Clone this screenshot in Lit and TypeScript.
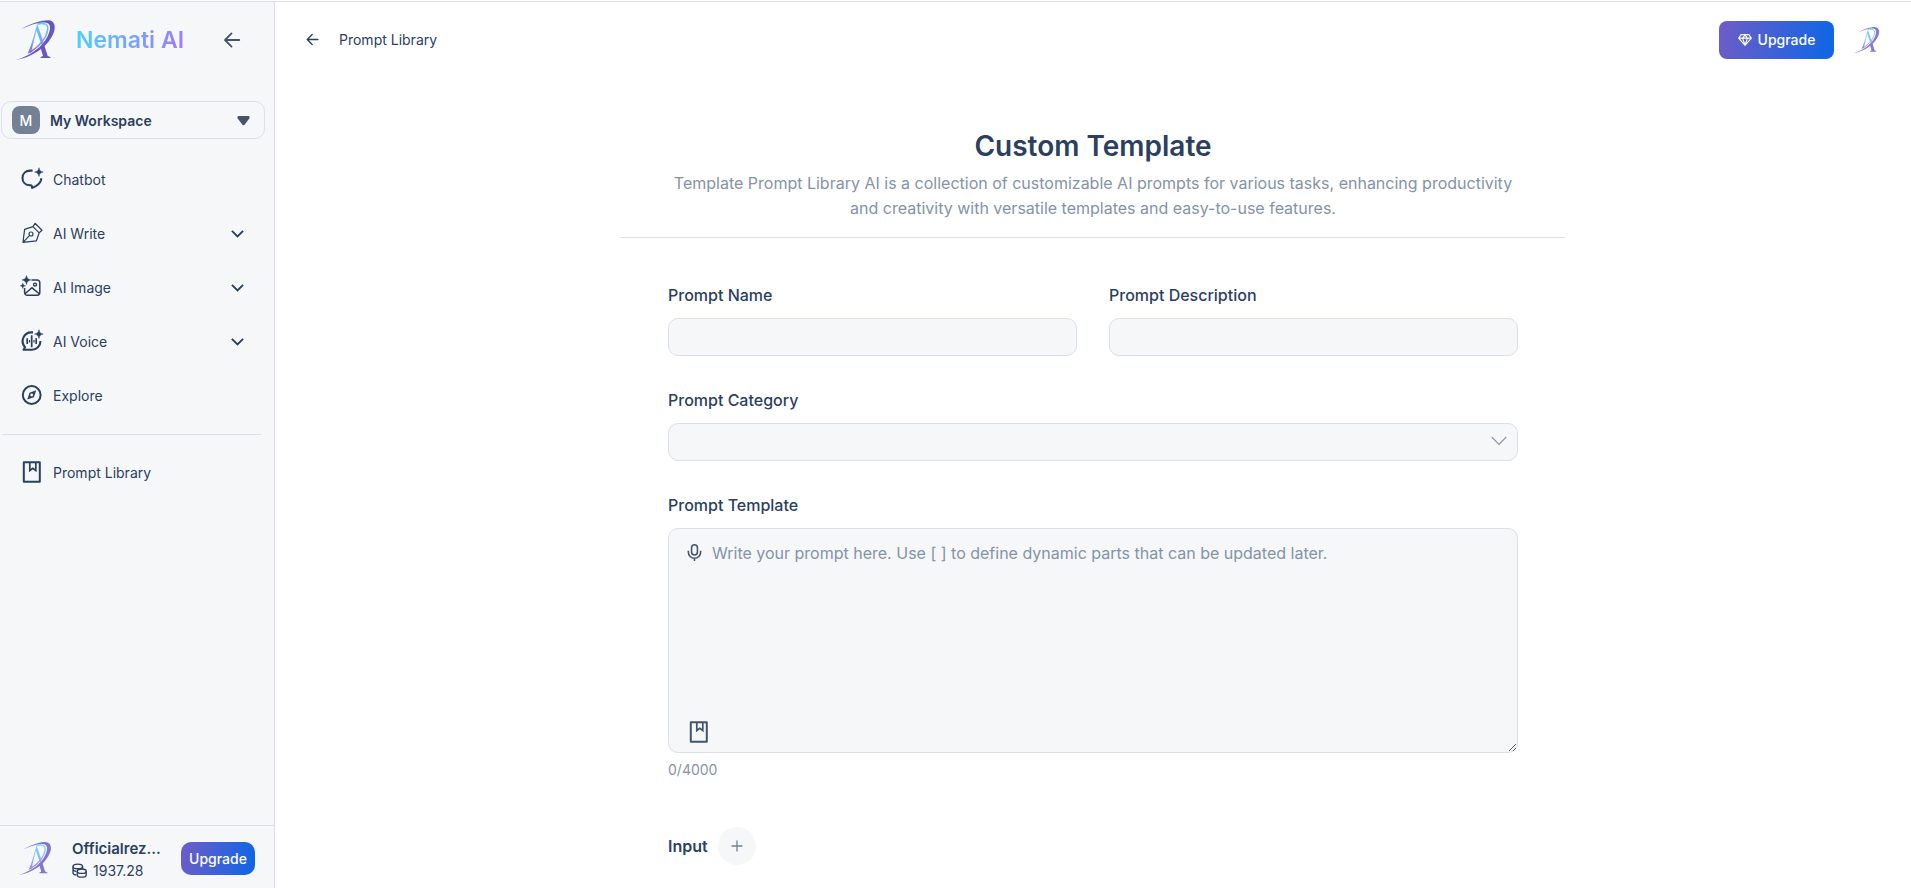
import { LitElement, html, css, svg, nothing } from "lit";
import { customElement, property, state } from "lit/decorators.js";

const icons: Record<string, unknown> = {
  chat: svg`<path d="M11.6 2.6H9.2C4.6 2.6 1.500 5.600 1.500 10c0 4.200 2.900 6.900 6.800 7.300h1.500c.9 0 1.300 .9 1.300 2.600 2.500-1 7.400-2.700 8.900-7.700.1-.5.2-1.200.2-1.900" fill="none" stroke="currentColor" stroke-width="2.100" stroke-linejoin="round"/><path d="M18 -.3c.6 2.800 1.300 3.600 4.200 4.400-2.900.7-3.600 1.500-4.200 4.400-.7-2.900-1.500-3.700-4.400-4.400 2.900-.8 3.700-1.600 4.400-4.400Z" fill="currentColor" stroke="currentColor" stroke-width=".5"/>`,
  pen: svg`<path d="M2 20.300 3.600 7.400 12 4.600l6.200 6.200-2.800 8Z M2 20.300l6.700-7 M12 4.600l2.100-3.200 6.900 6.900-2.800 2.500 M14.200 1.500 21 8.200" fill="none" stroke="currentColor" stroke-width="1.200" stroke-linejoin="round"/><circle cx="10" cy="12" r="2" fill="none" stroke="currentColor" stroke-width="1.200"/>`,
  image: svg`<path d="M10.500 4h5.700a2.600 2.600 0 0 1 2.600 2.600v10a2.600 2.600 0 0 1-2.600 2.600h-10a2.600 2.600 0 0 1-2.600-2.600V12M4 17.800l7-6 7.500 6.200" fill="none" stroke="currentColor" stroke-width="1.500"/><circle cx="14" cy="8.600" r="1.500" fill="none" stroke="currentColor" stroke-width="1.400"/><path d="M5.500-.5c.6 3 1.400 3.700 4.400 4.400-3 .7-3.800 1.500-4.400 4.500C4.800 5.400 4 4.600 1 3.900c3-.7 3.800-1.400 4.500-4.400ZM1.800 7.200c.4 1.700.9 2.200 2.700 2.600-1.800.4-2.300.9-2.700 2.700C1.400 10.700.9 10.200-.8 9.800c1.700-.4 2.200-.9 2.600-2.600Z" fill="currentColor" stroke="currentColor" stroke-width=".5"/>`,
  voice: svg`<path d="M12 2.400h-1.500A8.800 8.800 0 0 0 4 17.200L2.500 19.700h8.200A8.700 8.700 0 0 0 19.500 11" fill="none" stroke="currentColor" stroke-width="2.100" stroke-linejoin="round"/><path d="M6.200 8.300v5.700M10.700 5.300v12M15.200 8.300v5.700" fill="none" stroke="currentColor" stroke-width="1.700"/><path d="M8.500 10v2.400M13 10v2.400" fill="none" stroke="currentColor" stroke-width="1.200"/><path d="M18 -.3c.6 2.800 1.300 3.600 4.200 4.400-2.900.7-3.600 1.500-4.200 4.400-.7-2.900-1.500-3.700-4.400-4.400 2.900-.8 3.700-1.600 4.400-4.400Z" fill="currentColor" stroke="currentColor" stroke-width=".5"/>`,
  compass: svg`<circle cx="10.700" cy="11" r="8.900" fill="none" stroke="currentColor" stroke-width="2"/><path d="M15.200 6.300 12.900 13.200 6.300 15.600 8.500 8.800Z M10.700 9.600a1.400 1.400 0 1 0 0 2.800 1.400 1.400 0 0 0 0-2.800Z" fill="currentColor" fill-rule="evenodd"/>`,
  book: svg`<path d="M2.800 1.200h16v19.600h-16Z" fill="none" stroke="currentColor" stroke-width="2" stroke-linejoin="round"/><path d="M8.800 1v8.500l3-2.200 3 2.200V1" fill="none" stroke="currentColor" stroke-width="1.700"/>`,
  back: svg`<path d="M19 11H3.500M10.500 3.800 3.300 11l7.200 7.200" fill="none" stroke="currentColor" stroke-width="2" stroke-linecap="round" stroke-linejoin="round"/>`,
  chevron: svg`<path d="m1.500 6.500 9.500 9.300 9.500-9.300" fill="none" stroke="currentColor" stroke-width="3.200"/>`,
  thin: svg`<path d="m1 5.500 10 10.300L21 5.500" fill="none" stroke="currentColor" stroke-width="1.500"/>`,
  caret: svg`<path d="M3 3.500h16c2.200 0 3 2 1.800 4l-8 10.500c-1 1.300-2.600 1.300-3.600 0l-8-10.500C0 5.500.8 3.500 3 3.500Z" fill="currentColor"/>`,
  coins: svg`<g fill="none" stroke="currentColor" stroke-width="2"><ellipse cx="8.500" cy="5" rx="7" ry="3.400"/><path d="M1.500 5v9.500c0 1.500 2 2.700 5 3M1.500 9.500c.6 1.600 2.700 2.600 5 2.900M15.500 5v3.500"/><ellipse cx="14.300" cy="12" rx="6.500" ry="3.200"/><path d="M7.800 12v5.500c0 4.300 13 4.300 13 0V12"/></g>`,
  gem: svg`<path d="M5 2.500h12l4 5.500-10 11.500L1 8ZM1.500 8h19M7 8l4 10.500L15 8M7.500 8 11 3l3.500 5" fill="none" stroke="currentColor" stroke-width="1.700" stroke-linejoin="round"/>`,
  mic: svg`<g fill="none" stroke="currentColor" stroke-width="2"><rect x="7.200" y="1" width="7.600" height="13.200" rx="3.800"/><path d="M3 8.800v1.700a8 8 0 0 0 16 0V8.800M11 18.500V22"/></g>`,
  plus: svg`<path d="M11 1v20M1 11h20" fill="none" stroke="currentColor" stroke-width="2.400"/>`,
};

@customElement("ui-icon")
class UiIcon extends LitElement {
  @property() name = "";
  @property({ type: Number }) size = 22;
  static styles = css`
    :host { display: inline-flex; flex: none; }
    svg { display: block; overflow: visible; }
  `;
  render() {
    return html`<svg width=${this.size} height=${this.size} viewBox="0 0 22 22" aria-hidden="true">${icons[this.name] ?? nothing}</svg>`;
  }
}

@customElement("brand-mark")
class BrandMark extends LitElement {
  @property({ type: Number }) size = 40;
  @property({ type: Boolean, reflect: true }) soft = false;
  static styles = css`
    :host { display: inline-flex; flex: none; }
    svg { display: block; }
    :host([soft]) svg { opacity: 0.8; filter: blur(0.5px); }
  `;
  render() {
    return html`<svg width=${this.size} height=${this.size} viewBox="0 0 40 40" aria-hidden="true">
      <defs>
        <linearGradient id="g" x1="0" y1="0" x2="0" y2="1">
          <stop offset="0" stop-color="#4fd0fc" /><stop offset=".55" stop-color="#77a8ff" /><stop offset="1" stop-color="#8b62dd" />
        </linearGradient>
      </defs>
      <path d="M5 9C16 3 27-.3 33 .2c7 .6 7.300 9.500 2.500 17C29.500 28 15 37.500 0 40c14-4.200 26.500-13 31.500-23.500C35.500 8 35 2.600 28.500 2.400 22 2.300 14 5 5 9Z" fill="#6b55c4" />
      <path d="m24.200 26.500 3.500-3.200 4 12.600 2.700 1V38h-9.700v-1l2.300-1Z" fill="#6b55c4" />
      <path d="M21.200 3.800 27.800 23l-2.400 1.800-5-14.500L15.200 32l-3.600 1.800C16 24 18.500 14 21.200 3.800Z" fill="url(#g)" />
      <path d="M21.500 4C28 2.500 32.500 4.200 31.700 9.500 30.500 18 23 26.500 13.500 32.500" fill="none" stroke="url(#g)" stroke-width="1.500" />
    </svg>`;
  }
}

@customElement("side-bar")
class SideBar extends LitElement {
  static styles = css`
    :host { display: flex; flex-direction: column; box-sizing: border-box; background: #f6f7f9; border-right: 1px solid #dcdfe5; color: #2b3f62; }
    button { font: inherit; color: inherit; border: 0; background: none; padding: 0; cursor: pointer; }
    a { color: inherit; text-decoration: none; }
    .brand { display: flex; align-items: center; height: 76px; padding: 0 32px 0 16px; }
    .name { margin-left: 20px; font-size: 23px; font-weight: 600; line-height: 32px; background: linear-gradient(90deg, #4dcffd, #9d7cff); background-clip: text; color: transparent; }
    .collapse { display: flex; margin-left: auto; color: #44546f; }
    .workspace { display: flex; align-items: center; gap: 10px; height: 38px; margin: 23px 9px 13px 1px; padding: 0 14px 0 10px; border: 1px solid #dcdfe5; border-radius: 10px; font-size: 14px; font-weight: 600; }
    .workspace ui-icon { margin-left: auto; color: #44546f; }
    .badge { display: grid; place-items: center; width: 28px; height: 28px; border-radius: 8px; background: #748195; color: #fff; font-weight: 500; }
    .nav { display: flex; flex-direction: column; font-size: 14px; }
    .item { display: flex; align-items: center; gap: 10px; height: 54px; padding: 0 30px 0 21px; text-align: left; }
    .item .end { margin-left: auto; }
    .rule { height: 1px; margin: 12px 13px 10px 2px; background: #dcdfe5; }
    .account { display: flex; align-items: center; margin-top: auto; height: 59px; padding: 3px 19px 0; border-top: 1px solid #dcdfe5; }
    .who { flex: 1; min-width: 0; margin: 0 20px; }
    .user { font-size: 15px; font-weight: 600; line-height: 24px; white-space: nowrap; }
    .credits { display: flex; align-items: center; gap: 6px; font-size: 14px; line-height: 20px; }
    .upgrade { height: 33px; width: 74px; border-radius: 10px; background: linear-gradient(100deg, #6f5cc6, #0c66e8); color: #fff; font-size: 14px; font-weight: 500; }
  `;
  render() {
    const items = [
      ["chat", "Chatbot", false], ["pen", "AI Write", true], ["image", "AI Image", true], ["voice", "AI Voice", true], ["compass", "Explore", false],
    ] as const;
    return html`
      <div class="brand">
        <brand-mark></brand-mark><span class="name">Nemati AI</span>
        <button class="collapse" aria-label="Collapse sidebar"><ui-icon name="back" size="20"></ui-icon></button>
      </div>
      <button class="workspace"><span class="badge">M</span>My Workspace<ui-icon name="caret" size="13"></ui-icon></button>
      <nav class="nav">
        ${items.map(([icon, label, opens]) => opens
          ? html`<button class="item" aria-expanded="false"><ui-icon name=${icon}></ui-icon>${label}<ui-icon class="end" name="chevron" size="13"></ui-icon></button>`
          : html`<a class="item" href="#"><ui-icon name=${icon}></ui-icon>${label}</a>`)}
        <div class="rule"></div>
        <a class="item" href="#"><ui-icon name="book"></ui-icon>Prompt Library</a>
      </nav>
      <div class="account">
        <brand-mark soft size="33"></brand-mark>
        <div class="who">
          <div class="user">Officialrez...</div>
          <div class="credits"><ui-icon name="coins" size="15"></ui-icon>1937.28</div>
        </div>
        <button class="upgrade">Upgrade</button>
      </div>`;
  }
}

@customElement("prompt-form")
class PromptForm extends LitElement {
  @state() private text = "";
  static styles = css`
    :host { display: block; max-width: 850px; margin: 0 auto; color: #2b3f62; }
    .form { display: grid; grid-template-columns: 1fr 1fr; gap: 32px; }
    .field { display: grid; gap: 11px; }
    .wide { grid-column: 1 / -1; }
    label { font-size: 16px; font-weight: 500; line-height: 24px; }
    input, select, textarea { box-sizing: border-box; width: 100%; margin: 0; border: 1px solid #dcdfe5; border-radius: 10px; background: #f6f7f9; color: inherit; font: inherit; font-size: 16px; }
    input, select { height: 38px; padding: 0 12px; }
    select { appearance: none; }
    .stack { display: grid; position: relative; }
    .arrow { position: absolute; right: 11px; top: 10px; color: #8b94a8; pointer-events: none; }
    textarea { display: block; height: 225px; padding: 12px 16px 48px 43px; line-height: 24px; resize: vertical; }
    textarea::placeholder { color: #8493a8; }
    .tool { position: absolute; left: 18px; display: flex; padding: 0; border: 0; background: none; color: #44546f; cursor: pointer; }
    .dictate { top: 16px; }
    .library { left: 20px; bottom: 10px; }
    .count { margin-top: -4px; font-size: 14px; line-height: 20px; color: #8493a8; }
    .inputs { display: flex; align-items: center; gap: 10px; margin-top: 15px; }
    .inputs h2 { margin: 0; font-size: 16px; line-height: 24px; font-weight: 600; }
    .add { display: grid; place-items: center; width: 38px; height: 38px; padding: 0; border: 0; border-radius: 50%; background: #f6f7f9; color: #748195; cursor: pointer; }
  `;
  render() {
    return html`<form class="form">
      <div class="field"><label for="name">Prompt Name</label><input id="name" type="text" /></div>
      <div class="field"><label for="description">Prompt Description</label><input id="description" type="text" /></div>
      <div class="field wide">
        <label for="category">Prompt Category</label>
        <div class="stack"><select id="category"><option></option></select><ui-icon class="arrow" name="thin" size="16"></ui-icon></div>
      </div>
      <div class="field wide">
        <label for="template">Prompt Template</label>
        <div class="stack">
          <textarea id="template" maxlength="4000" placeholder="Write your prompt here. Use [ ] to define dynamic parts that can be updated later."
            @input=${(e: Event) => (this.text = (e.target as HTMLTextAreaElement).value)}></textarea>
          <button type="button" class="tool dictate" aria-label="Dictate"><ui-icon name="mic" size="17"></ui-icon></button>
          <button type="button" class="tool library" aria-label="Open library"><ui-icon name="book" size="22"></ui-icon></button>
        </div>
        <div class="count">${this.text.length}/4000</div>
      </div>
      <div class="inputs wide"><h2>Input</h2><button type="button" class="add" aria-label="Add input"><ui-icon name="plus" size="12"></ui-icon></button></div>
    </form>`;
  }
}

@customElement("app-root")
class AppRoot extends LitElement {
  static styles = css`
    :host { display: grid; grid-template-columns: 275px 1fr; box-sizing: border-box; min-height: 100vh; margin: 0; padding-top: 1px; border: 0; background: #fff; color: #2b3f62; font-family: Inter, "Open Sans", sans-serif; font-size: 14px; }
    .side, .main { border-top: 1px solid #dcdfe5; }
    .top { display: flex; align-items: center; height: 75px; padding: 0 31px 0 30px; }
    .crumb { display: flex; align-items: center; gap: 19px; color: inherit; text-decoration: none; }
    .upgrade { display: flex; align-items: center; justify-content: center; gap: 6px; margin-left: auto; width: 115px; height: 38px; border: 0; border-radius: 8px; background: linear-gradient(100deg, #6f5cc6, #0c66e8); color: #fff; font: inherit; font-weight: 500; cursor: pointer; }
    .me { display: flex; margin-left: 20px; padding: 0; border: 0; background: none; cursor: pointer; }
    .intro { max-width: 944px; margin: 47px auto 45px; border-bottom: 1px solid #dcdfe5; text-align: center; }
    h1 { margin: 0; font-size: 28px; line-height: 44px; font-weight: 600; }
    p { max-width: 850px; margin: 3px auto 16px; font-size: 16px; line-height: 25px; color: #8493a8; }
  `;
  render() {
    return html`
      <side-bar class="side"></side-bar>
      <main class="main">
        <header class="top">
          <a class="crumb" href="#"><ui-icon name="back" size="15"></ui-icon>Prompt Library</a>
          <button class="upgrade"><ui-icon name="gem" size="14"></ui-icon>Upgrade</button>
          <button class="me" aria-label="Account"><brand-mark soft size="26"></brand-mark></button>
        </header>
        <section class="intro">
          <h1>Custom Template</h1>
          <p>Template Prompt Library AI is a collection of customizable AI prompts for various tasks, enhancing productivity and creativity with versatile templates and easy-to-use features.</p>
        </section>
        <prompt-form></prompt-form>
      </main>`;
  }
}
